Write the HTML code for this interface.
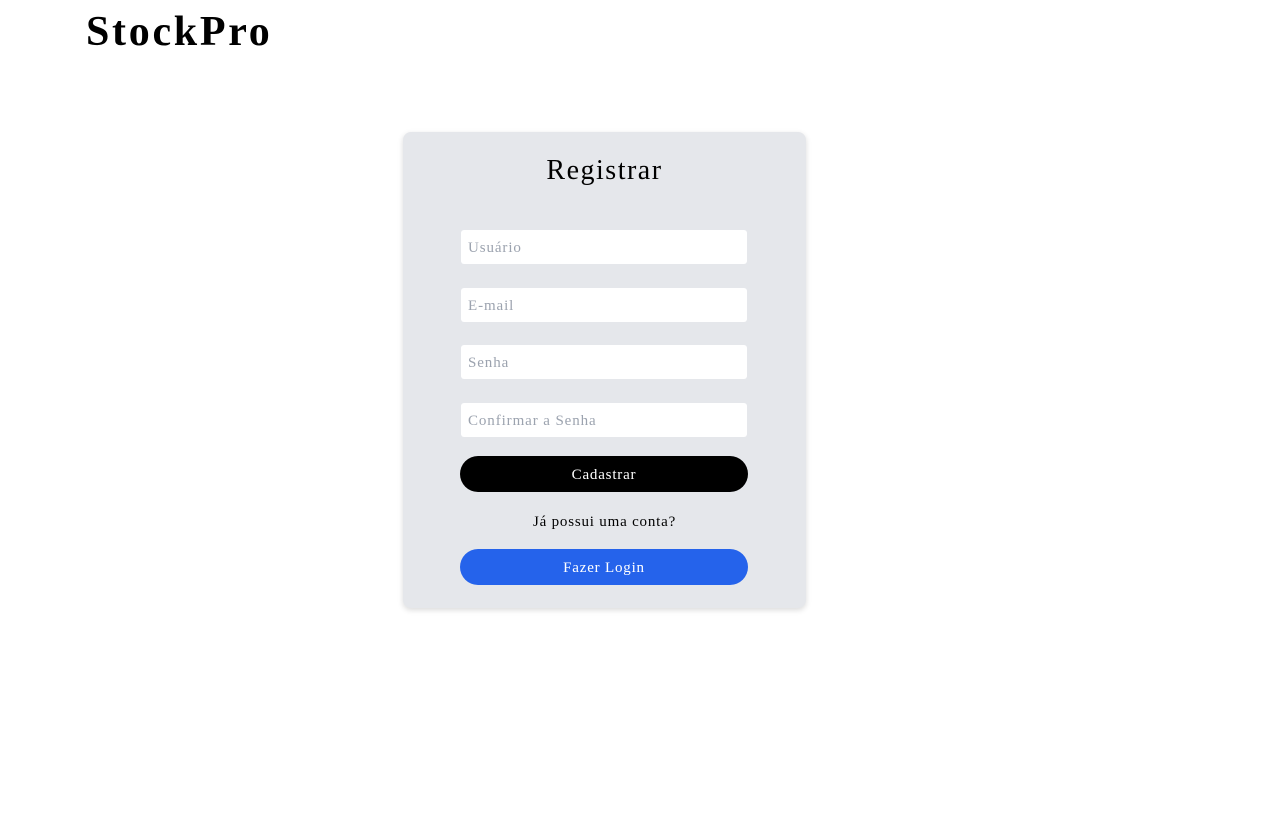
<!DOCTYPE html>
<html><head><meta charset="utf-8"><style>
body{margin:0;background:#fff;font-family:"Liberation Serif",serif;width:1280px;height:819px;position:relative;overflow:hidden}
h1{position:absolute;left:86px;top:8px;margin:0;font-size:42px;font-weight:bold;line-height:48px;color:#000;letter-spacing:2.7px}
.card{position:absolute;left:403px;top:132px;width:403px;height:476px;background:#e5e7eb;border-radius:8px;box-shadow:0 2px 6px rgba(0,0,0,.15)}
.card h2{margin:0;position:absolute;top:23px;width:100%;text-align:center;font-weight:normal;font-size:28px;letter-spacing:1.5px}
.in{position:absolute;left:58px;width:286px;height:34px;background:#fff;border-radius:3px;color:#9ca3af;font-size:15px;line-height:37px;padding-left:7px;box-sizing:border-box;letter-spacing:0.9px}
.btn{position:absolute;left:57px;width:288px;height:36px;border-radius:18px;color:#fff;text-align:center;line-height:38px;font-size:15px;letter-spacing:0.8px}
.t{position:absolute;top:382px;width:100%;text-align:center;font-size:15px;letter-spacing:0.8px}
</style></head><body>
<h1>StockPro</h1>
<div class="card">
<h2>Registrar</h2>
<div class="in" style="top:98px">Usuário</div>
<div class="in" style="top:156px">E-mail</div>
<div class="in" style="top:213px">Senha</div>
<div class="in" style="top:271px">Confirmar a Senha</div>
<div class="btn" style="top:324px;background:#000">Cadastrar</div>
<div class="t">Já possui uma conta?</div>
<div class="btn" style="top:417px;background:#2563eb">Fazer Login</div>
</div>
</body></html>
